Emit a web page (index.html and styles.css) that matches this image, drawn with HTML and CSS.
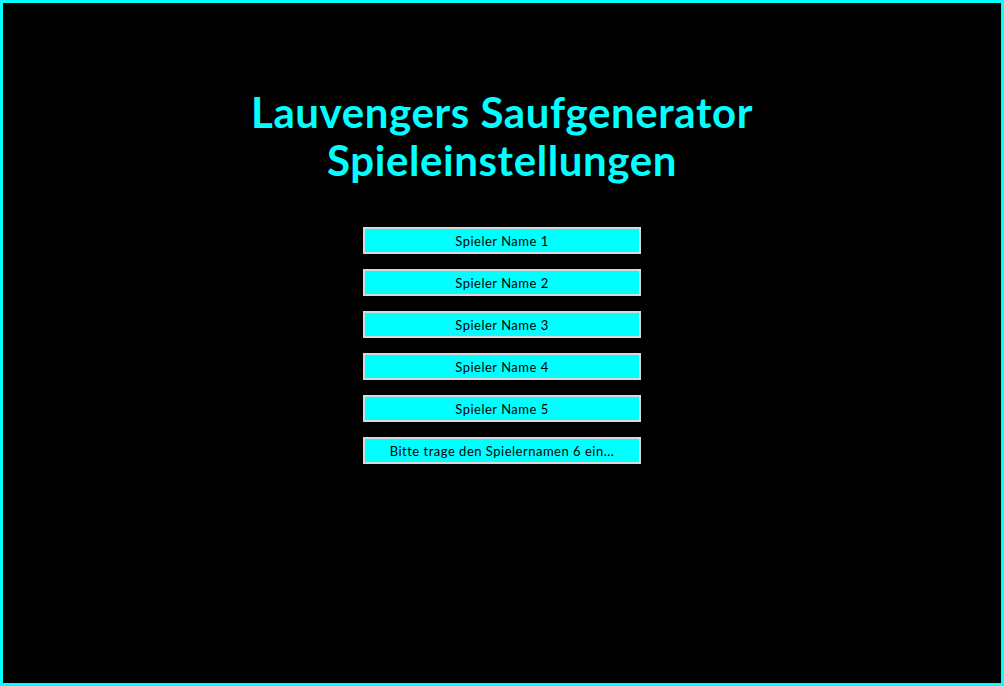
FILE: index.html
```html
<!DOCTYPE html>
<html lang="de">
<head>
<meta charset="utf-8">
<title>Lauvengers Saufgenerator</title>
<link rel="stylesheet" href="styles.css">
</head>
<body>
<main class="page">
  <h1 class="title">Lauvengers Saufgenerator<br>Spieleinstellungen</h1>
  <form class="players">
    <input class="player" type="text" value="Spieler Name 1">
    <input class="player" type="text" value="Spieler Name 2">
    <input class="player" type="text" value="Spieler Name 3">
    <input class="player" type="text" value="Spieler Name 4">
    <input class="player" type="text" value="Spieler Name 5">
    <input class="player" type="text" placeholder="Bitte trage den Spielernamen 6 ein...">
  </form>
</main>
</body>
</html>
```
FILE: styles.css
```css
html, body {
  margin: 0;
  padding: 0;
  height: 100%;
}
body {
  background: #000;
  box-sizing: border-box;
  border: 3px solid #00ffff;
  font-family: "Lato", "DejaVu Sans", sans-serif;
}
.page {
  display: flex;
  flex-direction: column;
  align-items: center;
  padding-top: 85px;
}
.title {
  margin: 0;
  color: #00ffff;
  font-size: 42px;
  font-weight: 700;
  line-height: 48px;
  letter-spacing: 0.6px;
  text-align: center;
}
.players {
  display: flex;
  flex-direction: column;
  gap: 15px;
  margin-top: 43px;
}
.player {
  box-sizing: border-box;
  width: 278px;
  height: 27px;
  margin: 0;
  padding: 0 4px;
  border: 2px solid #d8d8d8;
  background: #00ffff;
  color: #000;
  font-family: "Lato", "DejaVu Sans", sans-serif;
  font-size: 13px;
  letter-spacing: 0.5px;
  text-align: center;
  outline: none;
}
.player::placeholder {
  color: #000;
  opacity: 1;
}
```
